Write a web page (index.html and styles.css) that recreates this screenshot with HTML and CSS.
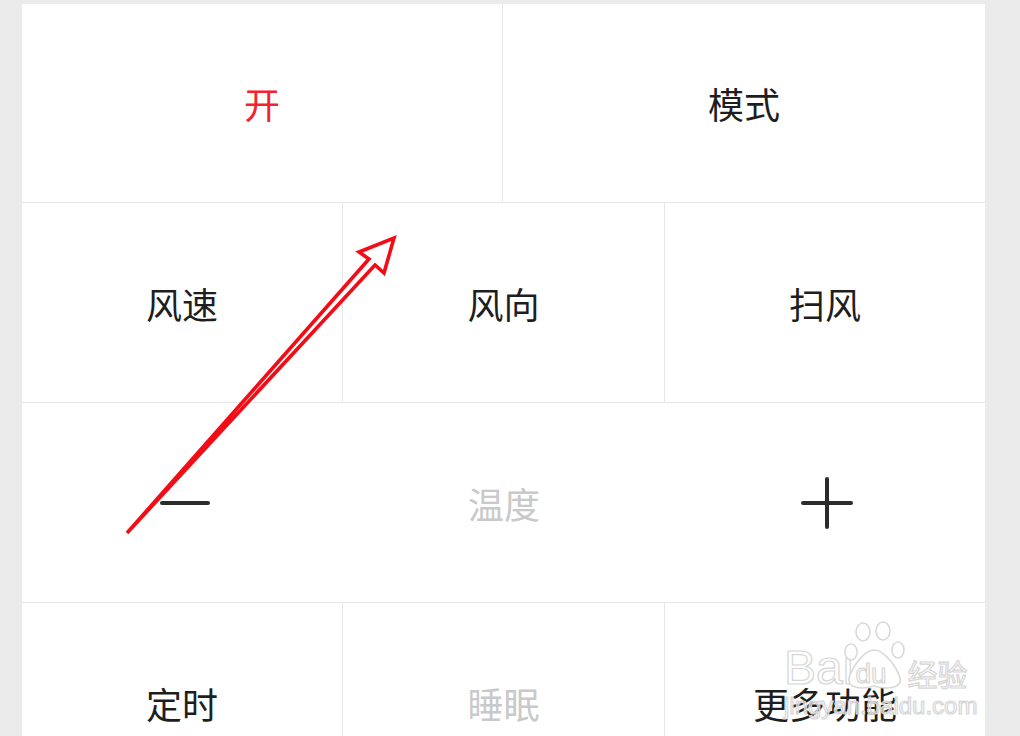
FILE: index.html
```html
<!DOCTYPE html>
<html lang="zh-CN">
<head>
    <meta charset="UTF-8">
    <title>空调遥控</title>
    <link rel="stylesheet" href="styles.css">
</head>
<body>
    <div class="panel">
        <div class="row row-2">
            <div class="cell on">开</div>
            <div class="cell">模式</div>
        </div>
        <div class="row row-3">
            <div class="cell">风速</div>
            <div class="cell">风向</div>
            <div class="cell">扫风</div>
        </div>
        <div class="row row-3 plain">
            <div class="cell"><span class="minus"></span></div>
            <div class="cell muted">温度</div>
            <div class="cell"><span class="plus"></span></div>
        </div>
        <div class="row row-3 last">
            <div class="cell">定时</div>
            <div class="cell muted">睡眠</div>
            <div class="cell">更多功能</div>
        </div>
    </div>

    <!-- 标注箭头 -->
    <svg class="arrow" width="1020" height="736" viewBox="0 0 1020 736">
        <path d="M127,533 L369,259 L359,252 L394,238 L384,273 L375,265 Z" fill="#fff" stroke="#f20d16" stroke-width="3.6" stroke-linejoin="miter"/>
    </svg>

    <!-- 水印 -->
    <div class="watermark">
        <div class="wm-top">
            <span class="wm-bai">Bai</span>
            <span class="wm-paw">
                <svg width="64" height="72" viewBox="0 0 64 72">
                    <g fill="#fff" stroke="#d9d9d9" stroke-width="1.6">
                        <ellipse cx="20" cy="12" rx="7" ry="9"/>
                        <ellipse cx="40" cy="11" rx="7" ry="9"/>
                        <ellipse cx="8" cy="32" rx="6" ry="8"/>
                        <ellipse cx="55" cy="30" rx="6" ry="8"/>
                        <path d="M31,30 C20,30 8,50 6,58 C4,68 18,70 31,66 C44,70 60,68 57,58 C54,48 42,30 31,30 Z"/>
                    </g>
                </svg>
                <span class="wm-du">du</span>
            </span>
            <span class="wm-jy">经验</span>
        </div>
        <div class="wm-url">jingyan.baidu.com</div>
    </div>
</body>
</html>
```

FILE: styles.css
```css
html {
    overflow: hidden;
}
body {
    margin: 0;
    width: 1020px;
    height: 736px;
    overflow: hidden;
    background-color: #ebebeb;
    font-family: "Noto Sans CJK SC", "Noto Sans", sans-serif;
    color: #1e1e1e;
    position: relative;
}
.panel {
    margin: 4px 0 0 22px;
    width: 963px;
    background-color: #fff;
}
.row {
    display: grid;
    height: 199px;
    border-bottom: 1px solid #e6e6e6;
}
.row-2 {
    grid-template-columns: 481px 1fr;
    height: 198px;
}
.row-3 {
    grid-template-columns: 321px 322px 1fr;
}
.last {
    border-bottom: none;
}
.cell {
    display: flex;
    align-items: center;
    justify-content: center;
    font-size: 36px;
    border-right: 1px solid #e6e6e6;
}
.cell:last-child {
    border-right: none;
}
.plain .cell {
    border-right: none;
}
.on {
    color: #f5222d;
}
.muted {
    color: #c9c9c9;
}

/* 温度 +/- */
.minus {
    display: block;
    width: 50px;
    height: 4px;
    background-color: #2b2b2b;
    border-radius: 2px;
    margin-left: 4px;
}
.plus {
    display: block;
    width: 52px;
    height: 52px;
    position: relative;
    margin-left: 4px;
}
.plus::before,
.plus::after {
    content: "";
    position: absolute;
    background-color: #2b2b2b;
    border-radius: 2px;
}
.plus::before {
    left: 0;
    top: 24px;
    width: 52px;
    height: 4px;
}
.plus::after {
    left: 24px;
    top: 0;
    width: 4px;
    height: 52px;
}

.arrow {
    position: absolute;
    left: 0;
    top: 0;
}

/* 百度经验水印 */
.watermark {
    position: absolute;
    left: 784px;
    top: 620px;
    width: 190px;
    font-family: "Liberation Sans", sans-serif;
    color: rgba(255, 255, 255, 0.6);
    -webkit-text-stroke: 1.2px #d6d6d6;
}
.wm-top {
    display: flex;
    align-items: flex-end;
    height: 72px;
}
.wm-bai {
    font-size: 48px;
    line-height: 48px;
}
.wm-paw {
    position: relative;
    width: 64px;
    height: 72px;
    margin-left: -10px;
}
.wm-paw svg {
    position: absolute;
    left: 0;
    top: 0;
}
.wm-du {
    position: absolute;
    left: 12px;
    top: 40px;
    font-size: 28px;
    line-height: 28px;
}
.wm-jy {
    font-family: "Noto Sans CJK SC", sans-serif;
    font-size: 30px;
    line-height: 38px;
}
.wm-url {
    font-size: 24px;
    line-height: 28px;
}
```
